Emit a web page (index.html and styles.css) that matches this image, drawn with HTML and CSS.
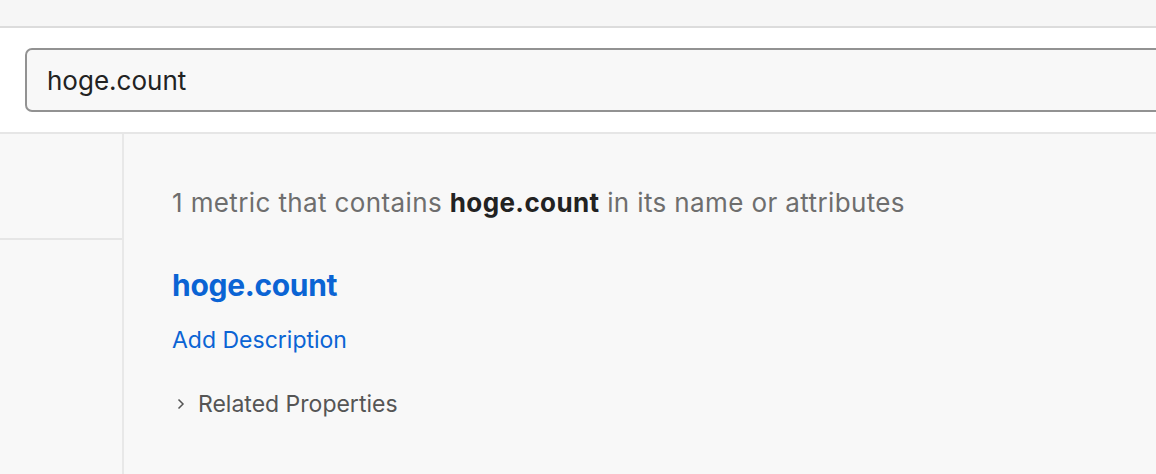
FILE: index.html
```html
<!DOCTYPE html>
<html>
<head>
<meta charset="utf-8">
<link rel="stylesheet" href="styles.css">
</head>
<body>
<div class="topbar"></div>
<div class="searchband">
  <div class="search"><span class="search-text">hoge.count</span></div>
</div>
<div class="main">
  <aside class="side">
    <div class="side-top"></div>
    <div class="side-rest"></div>
  </aside>
  <section class="content">
    <p class="summary">1 metric that contains <strong>hoge.count</strong> in its name or attributes</p>
    <h2 class="metric-name">hoge.count</h2>
    <a class="add-desc">Add Description</a>
    <div class="related">
      <svg class="chev" width="10" height="14" viewBox="0 0 10 14"><path d="M2.5 2.5 L7 7 L2.5 11.5" fill="none" stroke="#555" stroke-width="1.5"/></svg>
      <span>Related Properties</span>
    </div>
  </section>
</div>
</body>
</html>
```
FILE: styles.css
```css
* { box-sizing: border-box; }
html, body { margin: 0; padding: 0; }
body {
  width: 1156px;
  height: 474px;
  overflow: hidden;
  background: #f8f8f8;
  font-family: Inter, "Noto Sans", sans-serif;
}
.topbar {
  height: 28px;
  background: #f6f6f6;
  border-bottom: 2px solid #dcdcdc;
}
.searchband {
  background: #fff;
  height: 106px;
  padding: 20px 0 0 25px;
  border-bottom: 2px solid #e6e6e6;
  overflow: hidden;
}
.search {
  width: 1160px;
  height: 64px;
  border: 2px solid #929292;
  border-radius: 7px;
  background: #f8f8f8;
  padding: 0 0 0 20px;
  display: flex;
  align-items: center;
}
.search-text {
  font-size: 26px;
  color: #222;
}
.main {
  display: flex;
  height: 340px;
}
.side {
  width: 124px;
  border-right: 2px solid #e8e8e8;
  display: flex;
  flex-direction: column;
}
.side-top {
  height: 106px;
  border-bottom: 2px solid #e6e6e6;
}
.content {
  padding: 53px 0 0 48px;
}
.summary {
  margin: 0;
  font-size: 26px;
  line-height: 32px;
  color: #6e6e6e;
  letter-spacing: 0.38px;
}
.summary strong {
  color: #222;
  font-weight: 700;
}
.metric-name {
  margin: 48px 0 0 0;
  font-size: 30px;
  line-height: 36px;
  font-weight: 700;
  color: #0b64d4;
  letter-spacing: -0.3px;
}
.add-desc {
  display: block;
  margin-top: 23px;
  font-size: 23px;
  line-height: 28px;
  color: #0b64d4;
}
.related {
  display: flex;
  align-items: center;
  gap: 12px;
  margin-top: 36px;
  padding-left: 4px;
  font-size: 23px;
  line-height: 28px;
  color: #555;
}
```
